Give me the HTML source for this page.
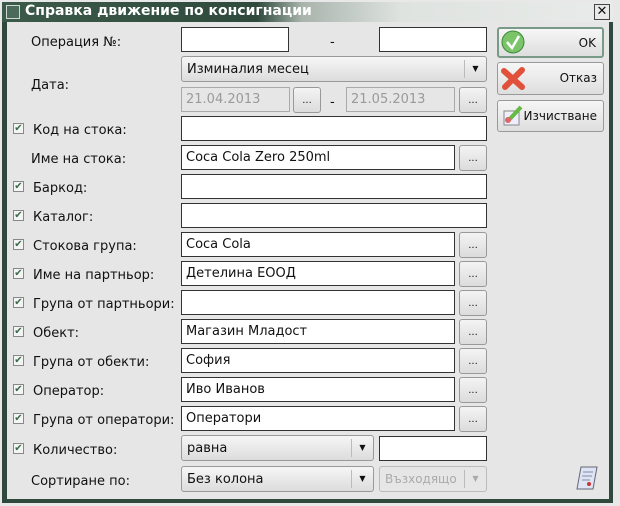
<!DOCTYPE html>
<html><head><meta charset="utf-8"><style>
*{box-sizing:border-box;margin:0;padding:0}
body{width:620px;height:506px;background:#e8e8e8;font-family:"DejaVu Sans","Liberation Sans",sans-serif;font-size:13px;color:#111;position:relative;overflow:hidden}
.a{position:absolute}
.win{left:2px;top:2px;width:611px;height:501px;background:#2f4a3c}
.title{left:2px;top:2px;width:611px;height:20px;background:linear-gradient(90deg,#3c5a4a 0,#2f4a3c 255px,#a9b4ad 300px,#dfe3e0 400px,#e8ebe9 100%)}
.tt{left:25px;top:3px;color:#fff;font-weight:bold;font-size:14px;white-space:nowrap}
.ticon{left:6px;top:5px;width:14px;height:14px;background:#4a6b5a;border:1px solid #cfd8d2}
.close{left:594px;top:4px;width:16px;height:16px;border:1px solid #444;background:#e9e9e9;font-weight:bold;font-size:13px;line-height:13px;text-align:center}
.content{left:7px;top:22px;width:602px;height:477px;background:#e6e6e6}
.in{height:25px;background:#fff;border:1px solid #333;padding:4px 4px 0;white-space:nowrap;overflow:hidden}
.dis{background:#e6e6e6;border:1px solid #aaa;color:#9a9a9a}
.btn{width:28px;height:26px;border:1px solid #999;border-radius:3px;background:linear-gradient(#f4f4f4,#dcdcdc);text-align:center;font-size:10px;line-height:26px}
.cb{height:26px;border:1px solid #999;border-radius:3px;background:linear-gradient(#f6f6f6,#dcdcdc);padding:5px 5px 0;white-space:nowrap}
.arr{position:absolute;right:0;top:3px;width:22px;height:18px;border-left:1px solid #bbb;font-size:8px;text-align:center;line-height:18px}
.lbl{white-space:nowrap;margin-top:2px}
.chk{width:11px;height:11px;border:1px solid #888;background:#f4f4f4;font-size:10px;line-height:9px;color:#3c6a4c;text-align:center}
.bb{left:497px;width:107px;border:1px solid #999;border-radius:3px;background:linear-gradient(#f6f6f6,#dedede);text-align:right;padding-right:6px;font-size:12px}
</style></head><body>
<div class="a win"></div>
<div class="a title"></div>
<div class="a ticon"></div>
<div class="a tt">Справка движение по консигнации</div>
<div class="a close">✕</div>
<div class="a content"></div>

<div class="a lbl" style="left:31px;top:33px">Операция №:</div>
<div class="a in" style="left:181px;top:27px;width:108px"></div>
<div class="a" style="left:330px;top:35px">-</div>
<div class="a in" style="left:379px;top:27px;width:108px"></div>

<div class="a lbl" style="left:31px;top:76px">Дата:</div>
<div class="a cb" style="left:181px;top:56px;width:306px">Изминалия месец<span class="arr">▼</span></div>
<div class="a in dis" style="left:181px;top:87px;width:109px">21.04.2013</div>
<div class="a btn" style="left:293px;top:87px">...</div>
<div class="a" style="left:330px;top:95px">-</div>
<div class="a in dis" style="left:346px;top:87px;width:109px">21.05.2013</div>
<div class="a btn" style="left:459px;top:87px">...</div>

<div class="a bb" style="top:27px;height:31px;line-height:29px;border:2px solid #7a9a88">OK</div>
<svg class="a" style="left:501px;top:30px" width="24" height="24"><circle cx="12" cy="12" r="11" fill="#7cc46a" stroke="#3a8a3a"/><path d="M6 12l5 6 7-12" stroke="#fff" stroke-width="2.5" fill="none"/></svg>
<div class="a bb" style="top:62px;height:33px;line-height:31px">Отказ</div>
<svg class="a" style="left:500px;top:65px" width="26" height="26"><path d="M4 6l18 16M22 5L5 22" stroke="#e0503a" stroke-width="6" stroke-linecap="round"/></svg>
<div class="a bb" style="top:100px;height:32px;line-height:30px">Изчистване</div>
<svg class="a" style="left:501px;top:103px" width="24" height="24"><rect x="3" y="8" width="15" height="14" fill="#eef" stroke="#888"/><path d="M7 18L20 4" stroke="#6b4" stroke-width="4"/><circle cx="7" cy="17" r="3" fill="#d66"/></svg>

<div class="a chk" style="left:13px;top:123px">✔</div><div class="a lbl" style="left:33px;top:121px">Код на стока:</div>
<div class="a in" style="left:181px;top:116px;width:306px"></div>
<div class="a lbl" style="left:31px;top:150px">Име на стока:</div>
<div class="a in" style="left:181px;top:145px;width:274px">Coca Cola Zero 250ml</div><div class="a btn" style="left:459px;top:145px">...</div>
<div class="a chk" style="left:13px;top:181px">✔</div><div class="a lbl" style="left:33px;top:179px">Баркод:</div>
<div class="a in" style="left:181px;top:174px;width:306px"></div>
<div class="a chk" style="left:13px;top:210px">✔</div><div class="a lbl" style="left:33px;top:208px">Каталог:</div>
<div class="a in" style="left:181px;top:203px;width:306px"></div>
<div class="a chk" style="left:13px;top:239px">✔</div><div class="a lbl" style="left:33px;top:237px">Стокова група:</div>
<div class="a in" style="left:181px;top:232px;width:274px">Coca Cola</div><div class="a btn" style="left:459px;top:232px">...</div>
<div class="a chk" style="left:13px;top:268px">✔</div><div class="a lbl" style="left:33px;top:266px">Име на партньор:</div>
<div class="a in" style="left:181px;top:261px;width:274px">Детелина ЕООД</div><div class="a btn" style="left:459px;top:261px">...</div>
<div class="a chk" style="left:13px;top:297px">✔</div><div class="a lbl" style="left:33px;top:295px">Група от партньори:</div>
<div class="a in" style="left:181px;top:290px;width:274px"></div><div class="a btn" style="left:459px;top:290px">...</div>
<div class="a chk" style="left:13px;top:326px">✔</div><div class="a lbl" style="left:33px;top:324px">Обект:</div>
<div class="a in" style="left:181px;top:319px;width:274px">Магазин Младост</div><div class="a btn" style="left:459px;top:319px">...</div>
<div class="a chk" style="left:13px;top:355px">✔</div><div class="a lbl" style="left:33px;top:353px">Група от обекти:</div>
<div class="a in" style="left:181px;top:348px;width:274px">София</div><div class="a btn" style="left:459px;top:348px">...</div>
<div class="a chk" style="left:13px;top:384px">✔</div><div class="a lbl" style="left:33px;top:382px">Оператор:</div>
<div class="a in" style="left:181px;top:377px;width:274px">Иво Иванов</div><div class="a btn" style="left:459px;top:377px">...</div>
<div class="a chk" style="left:13px;top:413px">✔</div><div class="a lbl" style="left:33px;top:411px">Група от оператори:</div>
<div class="a in" style="left:181px;top:406px;width:274px">Оператори</div><div class="a btn" style="left:459px;top:406px">...</div>
<div class="a chk" style="left:13px;top:443px">✔</div><div class="a lbl" style="left:33px;top:441px">Количество:</div>
<div class="a cb" style="left:181px;top:435px;width:193px">равна<span class="arr">▼</span></div>
<div class="a in" style="left:379px;top:436px;width:108px"></div>
<div class="a lbl" style="left:31px;top:472px">Сортиране по:</div>
<div class="a cb" style="left:181px;top:466px;width:193px">Без колона<span class="arr">▼</span></div>
<div class="a cb" style="left:379px;top:466px;width:108px;color:#aaa;border-color:#bbb;background:#e6e6e6;font-size:12px">Възходящо<span class="arr">▼</span></div>
<svg class="a" style="left:573px;top:463px" width="30" height="30"><path d="M8 4h16l-4 22H4z" fill="#dde4f4" stroke="#667"/><path d="M10 9h10M9 13h10M9 17h8" stroke="#88a"/><circle cx="16" cy="21" r="2" fill="#c33"/></svg>
</body></html>
